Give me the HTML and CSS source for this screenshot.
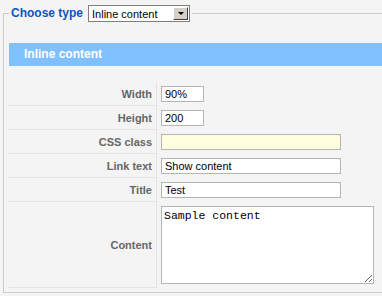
FILE: index.html
```html
<!DOCTYPE html>
<html lang="en">
<head>
    <meta charset="UTF-8">
    <title>Choose type</title>
    <link rel="stylesheet" href="styles.css">
</head>
<body>
    <fieldset class="adminform">
        <legend>
            Choose type
            <span class="select-wrap">
                <select id="type">
                    <option>Inline content</option>
                </select>
                <span class="select-btn"><i></i></span>
            </span>
        </legend>

        <div class="panel-title">Inline content</div>

        <table class="paramlist">
            <tr>
                <td class="key">Width</td>
                <td class="field"><input type="text" class="small" value="90%"></td>
            </tr>
            <tr>
                <td class="key">Height</td>
                <td class="field"><input type="text" class="small" value="200"></td>
            </tr>
            <tr>
                <td class="key">CSS class</td>
                <td class="field"><input type="text" class="wide css" value=""></td>
            </tr>
            <tr>
                <td class="key">Link text</td>
                <td class="field"><input type="text" class="wide" value="Show content"></td>
            </tr>
            <tr>
                <td class="key">Title</td>
                <td class="field"><input type="text" class="wide" value="Test"></td>
            </tr>
            <tr class="tall">
                <td class="key">Content</td>
                <td class="field"><textarea>Sample content</textarea></td>
            </tr>
        </table>
    </fieldset>
</body>
</html>
```

FILE: styles.css
```css
html, body {
    overflow: hidden;
}

body {
    margin: 0;
    background-color: #f4f4f4;
    font-family: "Liberation Sans", Arial, sans-serif;
    font-size: 11px;
    color: #333;
}

.adminform {
    width: 420px;
    margin: 5px 0 0 3px;
    padding: 21px 0 4px 5px;
    border: 1px solid #cccccc;
}

.adminform legend {
    padding: 0 2px;
    color: #0b55c4;
    font-size: 12px;
    font-weight: bold;
    height: 17px;
    line-height: 17px;
    display: flex;
    align-items: center;
    gap: 5px;
}

.select-wrap {
    position: relative;
    display: inline-block;
    width: 102px;
    height: 17px;
}

.select-wrap select {
    appearance: none;
    width: 102px;
    height: 17px;
    margin: 0;
    padding: 0 0 0 3px;
    border: 1px solid #7f7f7f;
    border-radius: 0;
    background: #fff;
    font-family: "Liberation Sans", Arial, sans-serif;
    font-size: 11px;
    color: #000;
}

/* fake windows drop button over the select */
.select-btn {
    position: absolute;
    top: 2px;
    right: 2px;
    width: 15px;
    height: 13px;
    background: #d4d0c8;
    border-top: 1px solid #fff;
    border-left: 1px solid #fff;
    border-right: 1px solid #404040;
    border-bottom: 1px solid #404040;
    box-sizing: border-box;
    pointer-events: none;
}

.select-btn i {
    position: absolute;
    left: 4px;
    top: 4px;
    border-left: 3px solid transparent;
    border-right: 3px solid transparent;
    border-top: 3px solid #000;
}

.panel-title {
    height: 23px;
    line-height: 23px;
    padding-left: 15px;
    background-color: #80c0ff;
    color: #fff;
    font-size: 12px;
    font-weight: bold;
}

.paramlist {
    margin-top: 16px;
    border-spacing: 0;
}

.paramlist td {
    height: 23px;
    padding: 0;
}

.paramlist td.key {
    width: 143px;
    padding-right: 4px;
    text-align: right;
    font-weight: bold;
    color: #666;
    border-bottom: 1px solid #e3e3e3;
    border-right: 1px solid #e3e3e3;
}

.paramlist td.field {
    padding-left: 4px;
}

.paramlist input {
    box-sizing: border-box;
    height: 16px;
    margin: 0;
    padding: 0 3px;
    border: 1px solid #b5b5b5;
    background: #fff;
    font-family: "Liberation Sans", Arial, sans-serif;
    font-size: 11px;
    color: #000;
    display: block;
}

.paramlist input.small {
    width: 43px;
}

.paramlist input.wide {
    width: 180px;
}

.paramlist input.css {
    background: #ffffdd;
}

.paramlist tr.tall td {
    height: 85px;
}

.paramlist textarea {
    box-sizing: border-box;
    display: block;
    width: 213px;
    height: 78px;
    margin: 0;
    padding: 2px;
    border: 1px solid #b5b5b5;
    background: #fff;
    font-family: "Liberation Mono", "Courier New", monospace;
    font-size: 11.5px;
    color: #000;
}
```
